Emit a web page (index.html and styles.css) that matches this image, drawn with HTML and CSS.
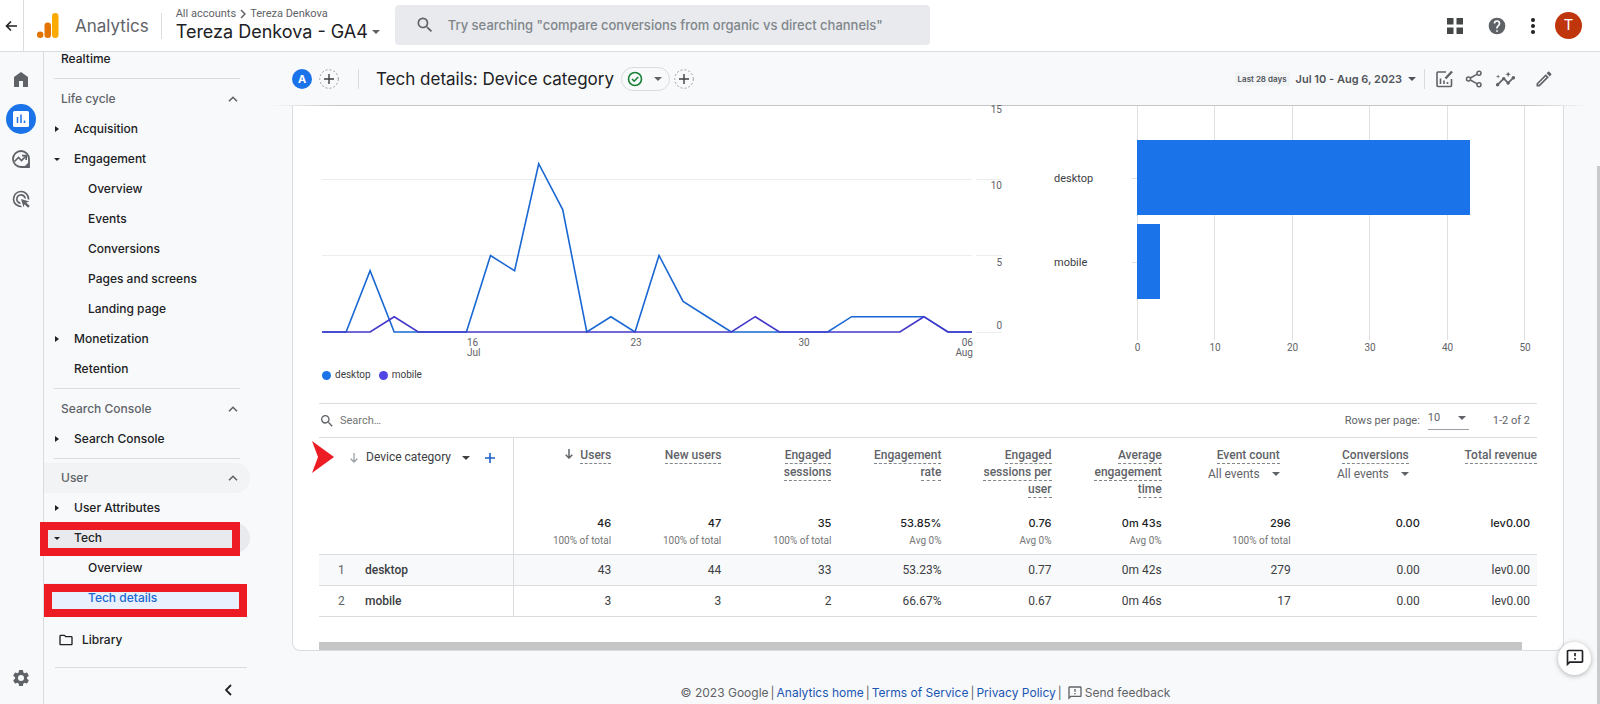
FILE: index.html
```html
<!DOCTYPE html>
<html lang="en">
<head>
<meta charset="utf-8">
<title>Analytics | Tech details: Device category</title>
<link rel="stylesheet" href="styles.css">
</head>
<body>
<header class="topbar">
  <button class="icon-btn back" aria-label="Back"><svg width="14" height="14" viewBox="0 0 14 14"><path d="M12 7H2.500M6 2.500 1.500 7 6 11.500" fill="none" stroke="#202124" stroke-width="1.600"/></svg></button>
  <div class="brand">
    <svg width="22" height="26" viewBox="0 0 22 26"><rect x="15" y="0" width="6.500" height="25" rx="3.200" fill="#f9ab00"/><rect x="7.500" y="9.500" width="6.500" height="15.500" rx="3.200" fill="#e37400"/><circle cx="3.200" cy="21.800" r="3.200" fill="#e37400"/></svg>
    <span class="brand-name">Analytics</span>
  </div>
  <div class="account">
    <div class="crumbs"><span>All accounts</span><svg width="6" height="10" viewBox="0 0 6 10"><path d="m1 1 4 4-4 4" fill="none" stroke="#5f6368" stroke-width="1.500"/></svg><span>Tereza Denkova</span></div>
    <button class="property">Tereza Denkova - GA4 <i class="caret"></i></button>
  </div>
  <label class="search">
    <svg width="20" height="20" viewBox="0 0 24 24" fill="#5f6368"><path d="M15.500 14h-.79l-.28-.27A6.470 6.470 0 0 0 16 9.500 6.500 6.500 0 1 0 9.500 16c1.610 0 3.090-.59 4.230-1.570l.27.28v.79l5 4.990L20.490 19l-4.990-5zm-6 0C7.010 14 5 11.990 5 9.500S7.010 5 9.500 5 14 7.010 14 9.500 11.990 14 9.500 14z"/></svg>
    <input type="search" aria-label="Search Analytics" placeholder="Try searching &quot;compare conversions from organic vs direct channels&quot;">
  </label>
  <div class="top-actions">
    <button class="icon-btn" aria-label="Apps"><svg width="16" height="16" viewBox="0 0 16 16" fill="#444746"><path d="M0 0h6.500v6.500H0zM9.500 0H16v6.500H9.500zM0 9.500h6.500V16H0zM9.500 9.500H16V16H9.500z"/></svg></button>
    <button class="icon-btn" aria-label="Help"><svg width="20" height="20" viewBox="0 0 24 24" fill="#5f6368"><path d="M12 2a10 10 0 1 0 0 20 10 10 0 0 0 0-20zm1 17h-2v-2h2zm2.070-7.750-.9.920C13.450 12.900 13 13.500 13 15h-2v-.5c0-1.100.45-2.100 1.170-2.830l1.240-1.260c.37-.36.590-.86.590-1.410a2 2 0 1 0-4 0H8a4 4 0 1 1 8 0c0 .88-.36 1.680-.93 2.250z"/></svg></button>
    <button class="icon-btn" aria-label="More"><svg width="4" height="16" viewBox="0 0 4 16" fill="#202124"><circle cx="2" cy="2" r="2"/><circle cx="2" cy="8" r="2"/><circle cx="2" cy="14" r="2"/></svg></button>
    <button class="avatar" aria-label="Account">T</button>
  </div>
</header>

<div class="body">
  <aside class="rail">
    <button class="rail-btn" aria-label="Home"><svg width="14" height="15" viewBox="0 0 14 15"><path d="M0 15V5l7-5 7 5v10H9V9H5v6z" fill="#5f6368"/></svg></button>
    <button class="rail-btn on" aria-label="Reports"><svg width="16" height="16" viewBox="0 0 16 16"><rect width="16" height="16" rx="1.500" fill="#fff"/><path d="M4.500 6v6M8 3.500V12M11.500 9.500V12" stroke="#1a73e8" stroke-width="1.500"/></svg></button>
    <button class="rail-btn" aria-label="Explore"><svg width="18" height="18" viewBox="0 0 18 18" fill="none" stroke="#5f6368"><path d="M17 17V9a8 8 0 1 0-8 8z" stroke-width="1.800"/><path d="M12.500 17 17 12.500V17z" fill="#5f6368"/><path d="m2.500 11.500 4-4 3 3 4-4" stroke-width="1.700"/><path d="M10 5.700h4.200V10" stroke-width="1.700"/></svg></button>
    <button class="rail-btn" aria-label="Advertising"><svg width="20" height="20" viewBox="0 0 24 24" fill="#5f6368"><path d="M11.710 17.990A6 6 0 1 1 17.990 11.710l-2.100-.63A4 4 0 1 0 11.080 15.890zM22 12c0 .3-.01.6-.04.9l-1.970-.59L20 12a8 8 0 1 0-7.690 7.990l.59 1.970A10 10 0 1 1 22 12zm-3.770 4.260L22 15l-10-3 3 10 1.260-3.770 4.270 4.270 1.980-1.980z"/></svg></button>
    <button class="rail-btn settings" aria-label="Admin"><svg width="20" height="20" viewBox="0 0 24 24" fill="#5f6368"><path d="M19.140 12.940c.04-.3.060-.61.060-.94 0-.32-.02-.64-.07-.94l2.030-1.580a.49.490 0 0 0 .12-.61l-1.920-3.320a.488.488 0 0 0-.59-.22l-2.390.96c-.5-.38-1.030-.7-1.620-.94l-.36-2.540a.484.484 0 0 0-.48-.41h-3.840c-.24 0-.43.170-.47.410l-.36 2.540c-.59.240-1.130.570-1.620.94l-2.390-.96a.48.480 0 0 0-.59.220L2.740 8.870c-.12.210-.08.470.12.610l2.030 1.580c-.05.3-.09.630-.09.940s.02.640.07.940l-2.030 1.580a.49.490 0 0 0-.12.610l1.920 3.320c.12.220.37.290.59.220l2.390-.96c.5.380 1.030.7 1.620.94l.36 2.540c.05.240.24.410.48.410h3.840c.24 0 .44-.17.470-.41l.36-2.540c.59-.24 1.130-.56 1.620-.94l2.390.96c.22.080.47 0 .59-.22l1.920-3.320a.48.480 0 0 0-.12-.61zM12 15.600a3.600 3.600 0 1 1 0-7.200 3.600 3.600 0 0 1 0 7.200z"/></svg></button>
  </aside>

  <nav class="nav">
    <a class="row section" href="#">Realtime</a>
    <hr>
    <button class="row section head">Life cycle<svg class="up" width="10" height="6" viewBox="0 0 10 6"><path d="m1 5.300 4-4 4 4"/></svg></button>
    <a class="row item closed" href="#">Acquisition</a>
    <a class="row item open" href="#">Engagement</a>
    <a class="row sub" href="#">Overview</a>
    <a class="row sub" href="#">Events</a>
    <a class="row sub" href="#">Conversions</a>
    <a class="row sub" href="#">Pages and screens</a>
    <a class="row sub" href="#">Landing page</a>
    <a class="row item closed" href="#">Monetization</a>
    <a class="row item" href="#">Retention</a>
    <hr>
    <button class="row section head">Search Console<svg class="up" width="10" height="6" viewBox="0 0 10 6"><path d="m1 5.300 4-4 4 4"/></svg></button>
    <a class="row item closed" href="#">Search Console</a>
    <hr>
    <button class="row section head hover">User<svg class="up" width="10" height="6" viewBox="0 0 10 6"><path d="m1 5.300 4-4 4 4"/></svg></button>
    <a class="row item closed" href="#">User Attributes</a>
    <a class="row item open current" href="#">Tech<span class="mark mark-tech"></span></a>
    <a class="row sub" href="#">Overview</a>
    <a class="row sub selected" href="#">Tech details<span class="mark mark-details"></span></a>
    <a class="row library" href="#"><svg width="16" height="16" viewBox="0 0 24 24" fill="#202124"><path d="M9.170 6l2 2H20v10H4V6h5.170M10 4H4c-1.100 0-2 .9-2 2v12c0 1.100.9 2 2 2h16c1.100 0 2-.9 2-2V8c0-1.100-.9-2-2-2h-8z"/></svg>Library</a>
    <hr class="wide">
    <button class="icon-btn collapse" aria-label="Collapse navigation"><svg width="7" height="12" viewBox="0 0 7 12"><path d="M6 1 1 6l5 5" fill="none" stroke="#202124" stroke-width="1.800"/></svg></button>
  </nav>

  <main class="main">
    <div class="report-bar">
      <button class="segment" aria-label="All users">A</button>
      <button class="add" aria-label="Add comparison"><svg width="20" height="20" viewBox="0 0 20 20"><circle cx="10" cy="10" r="9.300"/><path d="M10 5v10M5 10h10"/></svg></button>
      <h1>Tech details: Device category</h1>
      <button class="status" aria-label="Data quality"><svg width="16" height="16" viewBox="0 0 16 16" fill="none" stroke="#188038" stroke-width="1.600"><circle cx="8" cy="8" r="6.500"/><path d="m5 8 2.200 2.200 4-4.200"/></svg><i class="caret"></i></button>
      <button class="add" aria-label="Add filter"><svg width="20" height="20" viewBox="0 0 20 20"><circle cx="10" cy="10" r="9.300"/><path d="M10 5v10M5 10h10"/></svg></button>
      <div class="report-tools">
        <span class="chip">Last 28 days</span>
        <button class="range">Jul 10 - Aug 6, 2023 <i class="caret"></i></button>
        <div class="tool-icons">
          <button class="icon-btn" aria-label="Customize report"><svg width="18" height="18" viewBox="0 0 18 18" fill="none" stroke="#5f6368" stroke-width="1.600"><path d="M11 2H3a1 1 0 0 0-1 1v12.500a1 1 0 0 0 1 1h12.500a1 1 0 0 0 1-1V9M5.500 8.500V14M9 10.500V14M12.500 12v2"/><path d="m10.500 8.500 6.500-7" stroke-width="2.400"/></svg></button>
          <button class="icon-btn" aria-label="Share"><svg width="18" height="18" viewBox="0 0 18 18" fill="none" stroke="#5f6368" stroke-width="1.500"><circle cx="3.500" cy="9" r="2"/><circle cx="14" cy="3.200" r="2"/><circle cx="14" cy="14.800" r="2"/><path d="m5.300 8 7-3.800M5.300 10l7 3.800"/></svg></button>
          <button class="icon-btn" aria-label="Insights"><svg width="21" height="21" viewBox="0 0 24 24" fill="#5f6368"><path d="M21 8c-1.450 0-2.260 1.440-1.930 2.510l-3.550 3.560c-.3-.09-.74-.09-1.040 0l-2.550-2.550C12.270 10.450 11.460 9 10 9c-1.450 0-2.270 1.440-1.930 2.520l-4.560 4.550C2.440 15.740 1 16.550 1 18c0 1.100.9 2 2 2 1.450 0 2.260-1.440 1.930-2.510l4.550-4.560c.3.090.74.090 1.040 0l2.550 2.550C12.730 16.550 13.540 18 15 18c1.450 0 2.270-1.440 1.930-2.520l3.560-3.550c1.070.33 2.510-.48 2.510-1.930 0-1.100-.9-2-2-2zM15 9l.94-2.070L18 6l-2.060-.93L15 3l-.92 2.070L12 6l2.080.93zM3.500 11 4 9l2-.5L4 8l-.5-2L3 8l-2 .5L3 9z"/></svg></button>
          <button class="icon-btn edit" aria-label="Edit"><svg width="20" height="20" viewBox="0 0 24 24" fill="#5f6368"><path d="m14.060 9.020.92.920L5.920 19H5v-.92l9.060-9.060M17.660 3c-.25 0-.51.1-.7.290l-1.830 1.830 3.750 3.750 1.830-1.830a.996.996 0 0 0 0-1.410l-2.340-2.340c-.2-.2-.45-.29-.71-.29zm-3.600 3.190L3 17.250V21h3.750L17.810 9.940z"/></svg></button>
        </div>
      </div>
    </div>

    <section class="card">
      <div class="charts">
        <svg class="line-chart" viewBox="0 0 700 256" role="img" aria-label="Users by device category over time">
          <path class="grid" d="M3 73.500h650M3 149.500h650M657 73.500h26M657 149.500h26M657 226.500h26"/>
          <polyline class="series desktop" points="3,226 27.100,226 51.100,164.800 75.200,226 147.400,226 171.500,149.500 195.600,164.800 219.700,57.700 243.700,103.600 267.800,226 291.900,210.700 316,226 340,149.500 364.100,195.400 388.200,210.700 412.300,226 508.600,226 532.600,210.700 604.900,210.700 628.900,226 653,226"/>
          <polyline class="series mobile" points="3,226 51.100,226 75.200,210.700 99.300,226 412.300,226 436.300,210.700 460.400,226 580.800,226 604.900,210.700 628.900,226 653,226"/>
          <g class="axis" text-anchor="end"><text x="683" y="7">15</text><text x="683" y="83">10</text><text x="683" y="160">5</text><text x="683" y="223">0</text><text x="654" y="240">06</text><text x="654" y="250">Aug</text></g>
          <g class="axis"><text x="148" y="240">16</text><text x="148" y="250">Jul</text></g>
          <g class="axis" text-anchor="middle"><text x="317" y="240">23</text><text x="485" y="240">30</text></g>
        </svg>
        <svg class="bar-chart" viewBox="0 0 518 256" role="img" aria-label="Users by device category">
          <path class="grid strong" d="M118.500 0v234M195.500 0v234M273.500 0v234M350.500 0v234M428.500 0v234M505.500 0v234M113 72.500h5M113 156.500h5"/>
          <rect class="bar" x="118" y="34" width="333" height="75"/>
          <rect class="bar" x="118" y="118" width="23" height="75"/>
          <g class="cat"><text x="35" y="76">desktop</text><text x="35" y="160">mobile</text></g>
          <g class="axis" text-anchor="middle"><text x="118.500" y="245">0</text><text x="196" y="245">10</text><text x="273.500" y="245">20</text><text x="351" y="245">30</text><text x="428.500" y="245">40</text><text x="506" y="245">50</text></g>
        </svg>
      </div>
      <div class="legend"><span class="key k-desktop">desktop</span><span class="key k-mobile">mobile</span></div>

      <div class="table-bar">
        <label class="table-search">
          <svg width="16" height="16" viewBox="0 0 24 24" fill="#5f6368"><path d="M15.500 14h-.79l-.28-.27A6.470 6.470 0 0 0 16 9.500 6.500 6.500 0 1 0 9.500 16c1.610 0 3.090-.59 4.230-1.570l.27.28v.79l5 4.990L20.490 19l-4.990-5zm-6 0C7.010 14 5 11.990 5 9.500S7.010 5 9.500 5 14 7.010 14 9.500 11.990 14 9.500 14z"/></svg>
          <input type="search" aria-label="Search table" placeholder="Search…">
        </label>
        <div class="pager">
          <label for="rows">Rows per page:</label>
          <span class="select"><select id="rows"><option>10</option><option>25</option></select><i class="caret"></i></span>
          <span>1-2 of 2</span>
        </div>
      </div>

      <div class="table-wrap">
        <svg class="pointer" width="22" height="32" viewBox="0 0 22 32"><path d="M0 0 22 16 0 32 6 16z" fill="#ed1c24"/></svg>
        <table>
          <colgroup><col class="c-dim"><col class="c-first"><col class="c-num"><col class="c-num"><col class="c-num"><col class="c-num"><col class="c-num"><col class="c-event"><col class="c-event"><col class="c-last"></colgroup>
          <thead>
            <tr>
              <th class="dim"><div class="dim-head"><svg width="8" height="10" viewBox="0 0 8 10" fill="none" stroke="#9aa0a6" stroke-width="1.300"><path d="M4 0v9M.7 5.700 4 9l3.300-3.300"/></svg><button class="dim-name">Device category <i class="caret"></i></button><button class="icon-btn" aria-label="Add dimension"><svg width="10" height="10" viewBox="0 0 10 10"><path d="M5 0v10M0 5h10" stroke="#1a5fc8" stroke-width="1.600"/></svg></button></div></th>
              <th><svg class="sort" width="8" height="10" viewBox="0 0 8 10" fill="none" stroke="#5f6368" stroke-width="1.500"><path d="M4 0v9M.7 5.700 4 9l3.300-3.300"/></svg><span class="term">Users</span></th>
              <th><span class="term">New users</span></th>
              <th><span class="term">Engaged sessions</span></th>
              <th><span class="term">Engagement rate</span></th>
              <th><span class="term">Engaged sessions per user</span></th>
              <th><span class="term">Average engagement time</span></th>
              <th class="event"><span class="term">Event count</span><button class="pick">All events <i class="caret"></i></button></th>
              <th class="event"><span class="term">Conversions</span><button class="pick">All events <i class="caret"></i></button></th>
              <th class="revenue"><span class="term">Total revenue</span></th>
            </tr>
          </thead>
          <tbody>
            <tr class="totals"><td class="dim"></td><td><b>46</b><small>100% of total</small></td><td><b>47</b><small>100% of total</small></td><td><b>35</b><small>100% of total</small></td><td><b>53.85%</b><small>Avg 0%</small></td><td><b>0.76</b><small>Avg 0%</small></td><td><b>0m 43s</b><small>Avg 0%</small></td><td><b>296</b><small>100% of total</small></td><td><b>0.00</b></td><td><b>lev0.00</b></td></tr>
            <tr class="shade"><td class="dim"><span class="num">1</span><strong>desktop</strong></td><td>43</td><td>44</td><td>33</td><td>53.23%</td><td>0.77</td><td>0m 42s</td><td>279</td><td>0.00</td><td>lev0.00</td></tr>
            <tr><td class="dim"><span class="num">2</span><strong>mobile</strong></td><td>3</td><td>3</td><td>2</td><td>66.67%</td><td>0.67</td><td>0m 46s</td><td>17</td><td>0.00</td><td>lev0.00</td></tr>
          </tbody>
        </table>
      </div>
      <div class="hscroll"></div>
      <button class="fab" aria-label="Feedback"><svg width="20" height="20" viewBox="0 0 24 24" fill="#202124"><path d="M20 2H4c-1.100 0-2 .9-2 2v18l4-4h14c1.100 0 2-.9 2-2V4c0-1.100-.9-2-2-2zm0 14H5.170L4 17.170V4h16v12zM11 12h2v2h-2zm0-6h2v4h-2z"/></svg></button>
    </section>

    <footer class="footer">
      <span>© 2023 Google</span><span>|</span><a href="#">Analytics home</a><span>|</span><a href="#">Terms of Service</a><span>|</span><a href="#">Privacy Policy</a><span>|</span>
      <button class="feedback"><svg width="16" height="16" viewBox="0 0 24 24" fill="#5f6368"><path d="M20 2H4c-1.100 0-2 .9-2 2v18l4-4h14c1.100 0 2-.9 2-2V4c0-1.100-.9-2-2-2zm0 14H5.170L4 17.170V4h16v12zM11 12h2v2h-2zm0-6h2v4h-2z"/></svg>Send feedback</button>
    </footer>
  </main>
</div>
<div class="vscroll"></div>
</body>
</html>
```
FILE: styles.css
```css
* { box-sizing: border-box; }

:root {
  --ink: #202124;
  --grey: #5f6368;
  --line: #dadce0;
  --page: #f8f9fa;
  --blue: #1a73e8;
  --ui: Inter, "Liberation Sans", sans-serif;
  --data: Roboto, "Liberation Sans", sans-serif;
}

body {
  margin: 0;
  min-height: 100vh;
  display: flex;
  flex-direction: column;
  overflow: hidden;
  position: relative;
  background: var(--page);
  color: var(--ink);
  font: 12px/16px var(--ui);
}

button, input, select { font: inherit; color: inherit; background: none; border: 0; padding: 0; margin: 0; }
input { outline: 0; }
a { color: inherit; text-decoration: none; }
svg { display: block; flex: none; }
.icon-btn { display: flex; align-items: center; justify-content: center; }

.caret {
  display: inline-block;
  flex: none;
  border: 4px solid transparent;
  border-top-color: currentColor;
  border-bottom-width: 0;
}

/* Top bar */
.topbar {
  display: flex;
  align-items: center;
  height: 52px;
  background: #fff;
  border-bottom: 1px solid var(--line);
  position: relative;
  z-index: 1;
}
.back { width: 24px; align-self: stretch; border-right: 1px solid var(--line); }
.brand { display: flex; align-items: center; gap: 16px; padding: 0 12px 0 13px; border-right: 1px solid var(--line); height: 26px; }
.brand-name { font-size: 17px; line-height: 24px; color: var(--grey); }
.account { padding-left: 14px; width: 233px; padding-bottom: 2px; }
.crumbs { display: flex; align-items: center; gap: 4px; font: 11px/14px var(--data); color: var(--grey); }
.property { display: flex; align-items: center; gap: 4px; font-size: 18px; line-height: 22px; white-space: nowrap; }
.property .caret { color: var(--grey); }
.search {
  display: flex;
  align-items: center;
  gap: 13px;
  flex: 0 1 535px;
  height: 40px;
  margin-bottom: 2px;
  padding-left: 20px;
  border-radius: 4px;
  background: #e8eaed;
}
.search input { flex: 1; font-size: 13px; font-weight: 500; }
.search input::placeholder { color: #80868b; opacity: 1; }
.top-actions { display: flex; align-items: center; gap: 24px; margin-left: auto; padding-right: 18px; }
.avatar { width: 27px; height: 27px; margin-left: -4px; border-radius: 50%; background: #bf360c; color: #fff; font: 15px/27px var(--data); }

.body { flex: 1; display: flex; }

/* Icon rail */
.rail { width: 44px; border-right: 1px solid var(--line); display: flex; flex-direction: column; align-items: center; gap: 10px; padding: 12px 1px 11px 0; }
.rail-btn { width: 30px; height: 30px; border-radius: 50%; display: flex; align-items: center; justify-content: center; }
.rail-btn.on { background: var(--blue); }
.settings { margin-top: auto; }

/* Side navigation */
.nav { width: 207px; margin-top: -8px; display: flex; flex-direction: column; font-weight: 500; }
.row { display: flex; align-items: center; height: 30px; flex: none; position: relative; margin-right: 1px; text-align: left; font-weight: 500; }
.section { padding-left: 17px; padding-right: 12px; }
.head { color: var(--grey); justify-content: space-between; }
.up { fill: none; stroke: var(--grey); stroke-width: 1.6px; }
.item { padding-left: 30px; }
.sub { padding-left: 44px; }
.closed::before, .open::before { content: ""; width: 0; border: solid transparent; }
.closed::before { margin: 0 15px 0 -19px; border-width: 3px 0 3px 4px; border-left-color: var(--ink); }
.open::before { margin: 0 14px 0 -20px; border-width: 3px 3px 0; border-top-color: var(--ink); }
.hover { background: #f1f3f4; border-radius: 0 15px 15px 0; }
.current { background: #e8eaed; border-radius: 0 15px 15px 0; }
.selected { color: #1967d2; background: linear-gradient(#e8f0fe, #e8f0fe) no-repeat left / 195px 100%; }
.nav hr { width: 186px; height: 1px; margin: 4px 0 5px 10px; border: 0; background: var(--line); flex: none; }
.nav hr + .hover { margin-top: -1px; }
.library { gap: 8px; padding-left: 14px; margin-top: 12px; }
.nav hr.wide { width: 192px; margin: 12px 0 14px 11px; }
.collapse { width: 16px; height: 16px; margin-left: 176px; }

/* Annotation frames drawn over the navigation */
.mark { position: absolute; border: 8px solid #ed1c24; }
.mark-tech { left: -4px; top: -1px; width: 200px; height: 34px; }
.mark-details { left: 0; top: 1px; width: 203px; height: 33px; }

/* Report header */
.main { flex: 1; min-width: 0; display: flex; flex-direction: column; }
.report-bar {
  display: flex;
  align-items: center;
  height: 54px;
  margin: 0 10px 0 20px;
  padding: 0 36px 0 21px;
  background: linear-gradient(90deg, transparent, #c4c7c9 5%, #c4c7c9 95%, transparent) no-repeat bottom / 100% 1px;
}
.segment { width: 20px; height: 20px; border-radius: 50%; background: var(--blue); color: #fff; font-weight: 700; font-size: 11px; }
.add { margin-left: 7px; }
.add circle { fill: none; stroke: #9aa0a6; stroke-dasharray: 2 2; }
.add path { stroke: #3c4043; stroke-width: 1.4px; }
h1 { margin: 0 7px 0 19px; padding-left: 17px; border-left: 1px solid var(--line); font-size: 17px; line-height: 20px; font-weight: 400; white-space: nowrap; }
.status { display: flex; align-items: center; gap: 11px; width: 49px; height: 24px; padding: 0 9px 0 5px; border: 1px solid var(--line); border-radius: 12px; color: var(--grey); }
.status + .add { margin-left: 4px; }
.report-tools { display: flex; align-items: center; margin-left: auto; color: #3c4043; }
.chip { padding: 0 3px; background: #f1f3f4; border-radius: 2px; font-size: 8px; line-height: 14px; font-weight: 600; color: #50545a; }
.range { display: flex; align-items: center; gap: 6px; margin: 0 8px 0 6px; font-size: 11px; font-weight: 600; color: #50545a; }
.tool-icons { display: flex; align-items: center; gap: 12px; padding-left: 10px; border-left: 1px solid var(--line); height: 20px; }
.edit { margin-left: 6px; }

/* Report card */
.card { position: relative; margin: 0 36px 0 41px; padding: 0 26px; background: #fff; border: 1px solid var(--line); border-top: 0; border-radius: 0 0 8px 8px; }
.charts { display: grid; grid-template-columns: 700fr 518fr; }
.charts svg { width: 100%; height: auto; overflow: visible; }
.grid { stroke: #ececec; fill: none; }
.grid.strong { stroke: #e0e0e0; }
.series { fill: none; stroke-width: 1.6px; }
.series.desktop { stroke: #1967d2; }
.series.mobile { stroke: #4338ca; }
.axis { font: 10px var(--data); fill: var(--grey); }
.cat { font: 11px var(--data); fill: #3c4043; }
.bar { fill: var(--blue); }
.legend { display: flex; gap: 8px; padding: 5px 3px 20px; font: 10px/16px var(--data); color: #3c4043; }
.key { display: flex; align-items: center; gap: 4px; }
.key::before { content: ""; width: 9px; height: 9px; border-radius: 50%; }
.k-desktop::before { background: var(--blue); }
.k-mobile::before { background: #4f46e5; }

.table-bar { display: flex; align-items: center; justify-content: space-between; height: 34px; border-top: 1px solid var(--line); font: 11px/16px var(--data); color: var(--grey); }
.table-search { display: flex; align-items: center; gap: 5px; }
.table-search input { width: 200px; }
.table-search input::placeholder { color: #757575; opacity: 1; }
.pager { display: flex; align-items: center; padding-right: 7px; }
.select { position: relative; width: 41px; height: 20px; margin: 0 24px 2px 8px; border-bottom: 1px solid #9aa0a6; }
.select select { appearance: none; width: 100%; height: 16px; }
.select .caret { position: absolute; right: 3px; top: 6px; pointer-events: none; }

.table-wrap { position: relative; }
.pointer { position: absolute; left: -7px; top: 4px; }
table { width: 100%; table-layout: fixed; border-collapse: collapse; border-top: 1px solid var(--line); border-bottom: 1px solid var(--line); font: 12px/16px var(--data); color: var(--grey); }
.c-dim { width: 194px; }
.c-first { width: 108px; }
.c-last { width: 107px; }
.c-num { width: 110px; }
.c-event { width: 129px; }
th, td { padding: 0 10px 0 0; text-align: right; vertical-align: top; }
th { padding: 9px 10px 10px 22px; font-weight: 500; line-height: 17px; }
td { color: #3c4043; line-height: 30px; border-top: 1px solid var(--line); }
td:last-child { padding-right: 7px; }
.dim { text-align: left; border-right: 1px solid var(--line); padding-left: 0; }
.dim-head { display: flex; align-items: center; padding: 2px 0 0 31px; font-weight: 400; color: #3c4043; }
.dim-name { display: flex; align-items: center; gap: 11px; margin: 0 15px 0 8px; }
.sort { display: inline-block; margin-right: 7px; }
.term { border-bottom: 1px dashed #80868b; padding-bottom: 1px; }
.event { padding-right: 21px; }
.pick { display: flex; align-items: center; justify-content: flex-end; gap: 12px; width: 100%; line-height: 20px; font-weight: 400; }
.revenue { padding-right: 0; }
.totals td { border-top: 0; padding-top: 6px; height: 46px; }
.totals b, .totals small { display: block; line-height: 18px; }
.totals b { font-family: var(--ui); font-size: 11px; font-weight: 500; color: var(--ink); }
.totals small { font-size: 10px; color: #757575; }
.shade { background: var(--page); }
.num { display: inline-block; width: 46px; padding-left: 19px; color: var(--grey); }
.dim strong { font-weight: 500; }
.hscroll { height: 8px; margin: 25px 15px 0 0; background: #c6c6c6; }

.fab { position: absolute; right: -28px; bottom: -25px; width: 33px; height: 33px; border-radius: 50%; background: #fff; box-shadow: 0 1px 5px rgba(60, 64, 67, .4); display: flex; align-items: center; justify-content: center; }

.footer { display: flex; justify-content: center; align-items: center; gap: 2px; padding: 34px 0 3px; color: var(--grey); white-space: nowrap; }
.footer a { color: #1a56b4; }
.feedback { display: flex; align-items: center; gap: 2px; margin-left: 3px; }

.vscroll { position: absolute; right: 0; top: 166px; bottom: 0; width: 3px; background: #c8cacc; }
```
